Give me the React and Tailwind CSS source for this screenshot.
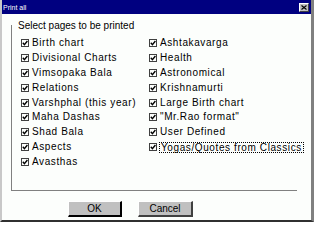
const leftItems = [
  "Birth chart",
  "Divisional Charts",
  "Vimsopaka Bala",
  "Relations",
  "Varshphal (this year)",
  "Maha Dashas",
  "Shad Bala",
  "Aspects",
  "Avasthas",
];

const rightItems = [
  "Ashtakavarga",
  "Health",
  "Astronomical",
  "Krishnamurti",
  "Large Birth chart",
  '"Mr.Rao format"',
  "User Defined",
  "Yogas/Quotes from Classics",
];

const CheckBox = () => (
  <svg width="8" height="8" viewBox="0 0 8 8" className="shrink-0">
    <rect x="0.5" y="0.5" width="7" height="7" fill="#fcfefc" stroke="#404040" />
    <path d="M1.8 3.8 L3.4 5.6 L6.4 2" fill="none" stroke="#000" strokeWidth="1.4" />
  </svg>
);

const Row = ({ label, focused }) => (
  <div className="h-[14.9px] flex items-center whitespace-nowrap">
    <CheckBox />
    <span
      className={
        focused
          ? "ml-[2px] px-px leading-[9px] border border-dotted border-black tracking-[0.6px]"
          : "ml-[3px] leading-[12px] tracking-[0.6px]"
      }
    >
      {label}
    </span>
  </div>
);

export default function App() {
  return (
    <div
      className="w-[314px] h-[222px] flex flex-col bg-[#fcfefc] border-l-2 border-l-[#c8c8c8] border-r-[3px] border-r-[#808080] border-b-2 border-b-[#303030] text-black text-[10px]"
      style={{ fontFamily: '"Liberation Sans", Arial, sans-serif' }}
    >
      {/* Title bar */}
      <div className="h-[14px] bg-[#000080] flex items-center justify-between pl-px pr-[2px]">
        <span className="text-white text-[7px] leading-none">Print all</span>
        <div className="w-[10px] h-[9px] bg-[#c0c0c0] border-t border-l border-t-white border-l-white border-b border-r border-b-[#404040] border-r-[#404040] flex items-center justify-center">
          <svg width="6" height="5" viewBox="0 0 6 5">
            <path d="M0.5 0.5 L5.5 4.5 M5.5 0.5 L0.5 4.5" stroke="#000" strokeWidth="1.1" />
          </svg>
        </div>
      </div>

      {/* Group box */}
      <div className="mt-[11px] ml-[9px] w-[286px] h-[166px] border-l border-b border-[#808080]">
        <div className="-mt-[5px] ml-[6px] h-[12px] leading-[12px]">
          Select pages to be printed
        </div>
        <div className="mt-[3.5px] pl-[9px] flex">
          <div className="w-[128px] shrink-0 flex flex-col">
            {leftItems.map((item) => (
              <Row key={item} label={item} />
            ))}
          </div>
          <div className="flex flex-col">
            {rightItems.map((item, i) => (
              <Row key={item} label={item} focused={i === rightItems.length - 1} />
            ))}
          </div>
        </div>
      </div>

      {/* Buttons */}
      <div className="mt-[10px] ml-[66px] flex gap-[16px]">
        <button className="w-[54px] h-[16px] bg-[#c0c0c0] border-t border-l border-t-white border-l-white border-b-2 border-r-2 border-b-black border-r-black text-[10px] leading-none">
          OK
        </button>
        <button className="w-[55px] h-[16px] bg-[#c0c0c0] border-t border-l border-t-white border-l-white border-b-2 border-r-2 border-b-[#404040] border-r-[#404040] text-[10px] leading-none">
          Cancel
        </button>
      </div>
    </div>
  );
}
